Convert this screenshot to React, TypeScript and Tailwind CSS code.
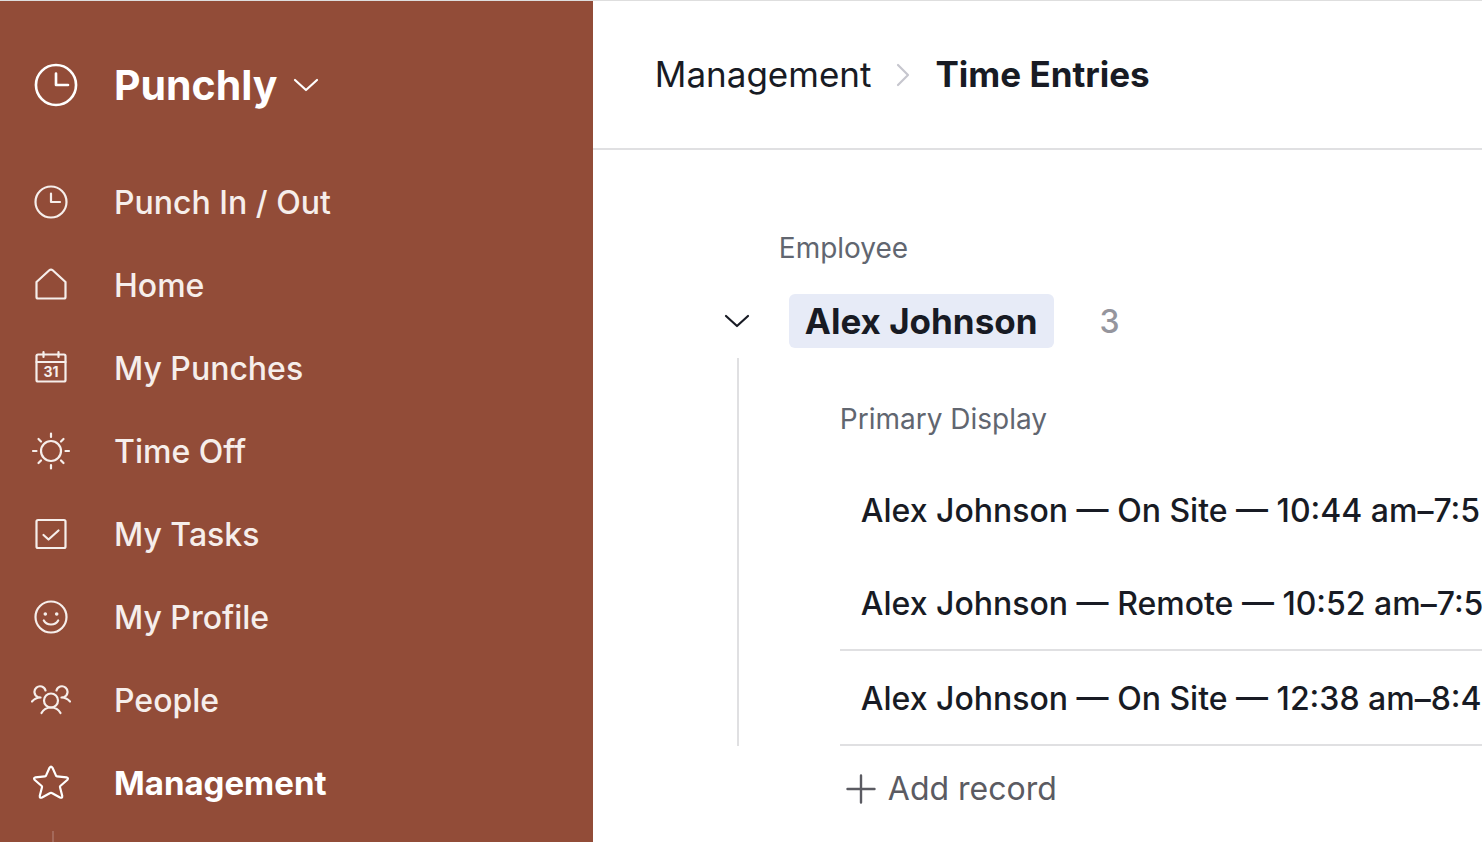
import type { ReactNode } from 'react';

type NavItem = { label: string; icon: ReactNode; active?: boolean };

const NAV_ITEMS: NavItem[] = [
  { label: 'Punch In / Out', icon: <ClockGlyph /> },
  {
    label: 'Home',
    icon: <path d="M5.5 17 L18.3 5.3 Q20 3.8 21.7 5.3 L34.5 17 V32 Q34.5 33.5 33 33.5 H7 Q5.5 33.5 5.5 32 Z" />,
  },
  {
    label: 'My Punches',
    icon: (
      <>
        <rect x="5.5" y="6.5" width="29" height="27" rx="1.5" />
        <path d="M5.5 14 H34.5 M12.5 4 V9 M27.5 4 V9" />
        <text x="20" y="29" textAnchor="middle" fontSize="14" fontWeight="700" fill="currentColor" stroke="none">
          31
        </text>
      </>
    ),
  },
  {
    label: 'Time Off',
    icon: (
      <>
        <circle cx="20" cy="20" r="10" />
        <path d="M20 2.5 V6 M20 34 V37.5 M2 20 H5.5 M34.5 20 H38 M7.5 8 L10 10.5 M32.5 8 L30 10.5 M7.5 32 L10 29.5 M32.5 32 L30 29.5" />
      </>
    ),
  },
  {
    label: 'My Tasks',
    icon: (
      <>
        <rect x="5.5" y="6" width="29" height="28" rx="1.5" />
        <path d="M12.5 21 L17.5 25.5 L27.5 16.5" />
      </>
    ),
  },
  {
    label: 'My Profile',
    icon: (
      <>
        <circle cx="20" cy="20" r="15.5" />
        <circle cx="14.3" cy="17" r="1.8" fill="currentColor" stroke="none" />
        <circle cx="25.7" cy="17" r="1.8" fill="currentColor" stroke="none" />
        <path d="M12.8 23.5 Q15 27.5 20 27.5 Q25 27.5 27.2 23.5" />
      </>
    ),
  },
  {
    label: 'People',
    icon: (
      <>
        <circle cx="20" cy="20.5" r="7" />
        <path d="M10.5 33 Q13.5 27.5 20 27.5 Q26.5 27.5 29.5 33" />
        <path d="M14.5 10.5 A5.6 5.6 0 1 0 6.8 17 L9.5 17.5 Q4.5 17.5 1 21.5" />
        <path d="M25.5 10.5 A5.6 5.6 0 1 1 33.2 17 L30.5 17.5 Q35.5 17.5 39 21.5" />
      </>
    ),
  },
  {
    label: 'Management',
    active: true,
    icon: (
      <path d="M18.5 4.8 Q20 2.5 21.5 4.8 L25 12.6 Q25.2 13.2 26 13.3 L35.5 14.3 Q38 14.8 36.2 17 L29.3 23 Q28.8 23.500 29 24.200 L31.2 32.8 Q31.5 35.5 29 34.5 L20.800 30 Q20 29.500 19.200 30 L11 34.5 Q8.5 35.5 8.8 32.8 L11 24.200 Q11.200 23.500 10.700 23 L3.8 17 Q2 14.8 4.5 14.3 L14 13.3 Q14.8 13.2 15 12.6 Z" />
    ),
  },
];

const RECORDS = [
  { title: 'Alex Johnson — On Site — 10:44 am–7:5', divided: false },
  { title: 'Alex Johnson — Remote — 10:52 am–7:5', divided: true },
  { title: 'Alex Johnson — On Site — 12:38 am–8:4', divided: true },
];

function ClockGlyph() {
  return (
    <>
      <circle cx="20" cy="20" r="15.5" />
      <path d="M20 11.5 V20 H29" />
    </>
  );
}

function Icon({ children, className }: { children: ReactNode; className: string }) {
  return (
    <svg
      viewBox="0 0 40 40"
      fill="none"
      stroke="currentColor"
      strokeWidth="2.2"
      strokeLinecap="round"
      strokeLinejoin="round"
      aria-hidden="true"
      className={className}
    >
      {children}
    </svg>
  );
}

function ChevronDown() {
  return (
    <svg
      viewBox="0 0 26 14"
      fill="none"
      stroke="currentColor"
      strokeWidth="2.2"
      strokeLinecap="round"
      strokeLinejoin="round"
      aria-hidden="true"
      className="h-3.5 w-[26px] shrink-0"
    >
      <path d="M2 2 L13 12 L24 2" />
    </svg>
  );
}

function Sidebar() {
  return (
    <aside className="w-2/5 shrink-0 overflow-hidden bg-[#924c38] text-white">
      <button type="button" className="mt-11 flex h-20 w-full items-center pl-8 text-left">
        <Icon className="size-12 shrink-0">
          <circle cx="20" cy="20" r="16.7" />
          <path d="M20 10.5 V20 H30" />
        </Icon>
        <span className="mr-4 ml-[34px] text-[41px] leading-none font-bold">Punchly</span>
        <ChevronDown />
      </button>
      <nav className="mt-9">
        {NAV_ITEMS.map((item) => (
          <a
            key={item.label}
            href="#"
            aria-current={item.active ? 'page' : undefined}
            className={`flex h-[83px] items-center gap-[43px] pl-[31px] ${
              item.active ? 'text-[33px] font-bold text-white' : 'text-[32px] font-medium text-[#f6eeeb]'
            }`}
          >
            <Icon className="mb-0.5 size-10 shrink-0">{item.icon}</Icon>
            {item.label}
          </a>
        ))}
      </nav>
      <div className="mt-1.5 ml-[52px] h-4 w-0.5 bg-[#a4695a]" />
    </aside>
  );
}

function RecordGroup() {
  return (
    <section className="pt-[78px] pl-[131px]">
      <p className="pl-[55px] text-[28px] leading-10 text-[#616670]">Employee</p>
      <div className="mt-[26px] flex items-center">
        <button type="button" aria-label="Collapse Alex Johnson">
          <ChevronDown />
        </button>
        <h2 className="ml-[39px] flex h-[54px] items-center rounded-md bg-[#e7ebf7] px-4 text-[35px] font-bold">
          Alex Johnson
        </h2>
        <span className="ml-[46px] pt-0.5 text-[32px] font-medium text-[#95959d]">3</span>
      </div>
      <div className="mt-2.5 ml-[13px] flex">
        <div className="mr-[101px] w-0.5 shrink-0 bg-[#e0e0e2]" />
        <table className="w-full border-collapse text-left whitespace-nowrap">
          <thead>
            <tr>
              <th className="h-[105px] pt-4 text-[28px] font-normal text-[#616670]">Primary Display</th>
            </tr>
          </thead>
          <tbody className="text-[32px] font-medium">
            {RECORDS.map((record) => (
              <tr key={record.title} className={record.divided ? 'h-[95px] border-b-2 border-[#e0e0e2]' : 'h-[92px]'}>
                <td className="pt-[3px] pl-[21px]">{record.title}</td>
              </tr>
            ))}
          </tbody>
        </table>
      </div>
      <button type="button" className="ml-[122px] flex h-[86px] items-center gap-3 text-[32px] text-[#5b5b62]">
        <svg
          viewBox="0 0 30 30"
          stroke="currentColor"
          strokeWidth="2.4"
          strokeLinecap="round"
          aria-hidden="true"
          className="size-[30px]"
        >
          <path d="M15 1.5 V28.5 M1.5 15 H28.5" />
        </svg>
        Add record
      </button>
    </section>
  );
}

export default function App() {
  return (
    <div className="flex h-screen overflow-hidden border-t border-[#dedede] bg-white font-['Inter','Liberation_Sans',sans-serif] text-[#181b24]">
      <Sidebar />
      <main className="min-w-0 flex-1 overflow-hidden">
        <header className="border-b-2 border-[#e0e0e2]">
          <nav aria-label="Breadcrumb" className="flex h-[147px] items-center pl-[62px] text-[35px]">
            <a href="#">Management</a>
            <svg
              viewBox="0 0 14 24"
              fill="none"
              stroke="currentColor"
              strokeWidth="2.2"
              strokeLinecap="round"
              strokeLinejoin="round"
              aria-hidden="true"
              className="mx-[25px] h-6 w-3.5 text-[#c6c6ce]"
            >
              <path d="M2 2 L12 12 L2 22" />
            </svg>
            <span aria-current="page" className="font-bold">
              Time Entries
            </span>
          </nav>
        </header>
        <RecordGroup />
      </main>
    </div>
  );
}
